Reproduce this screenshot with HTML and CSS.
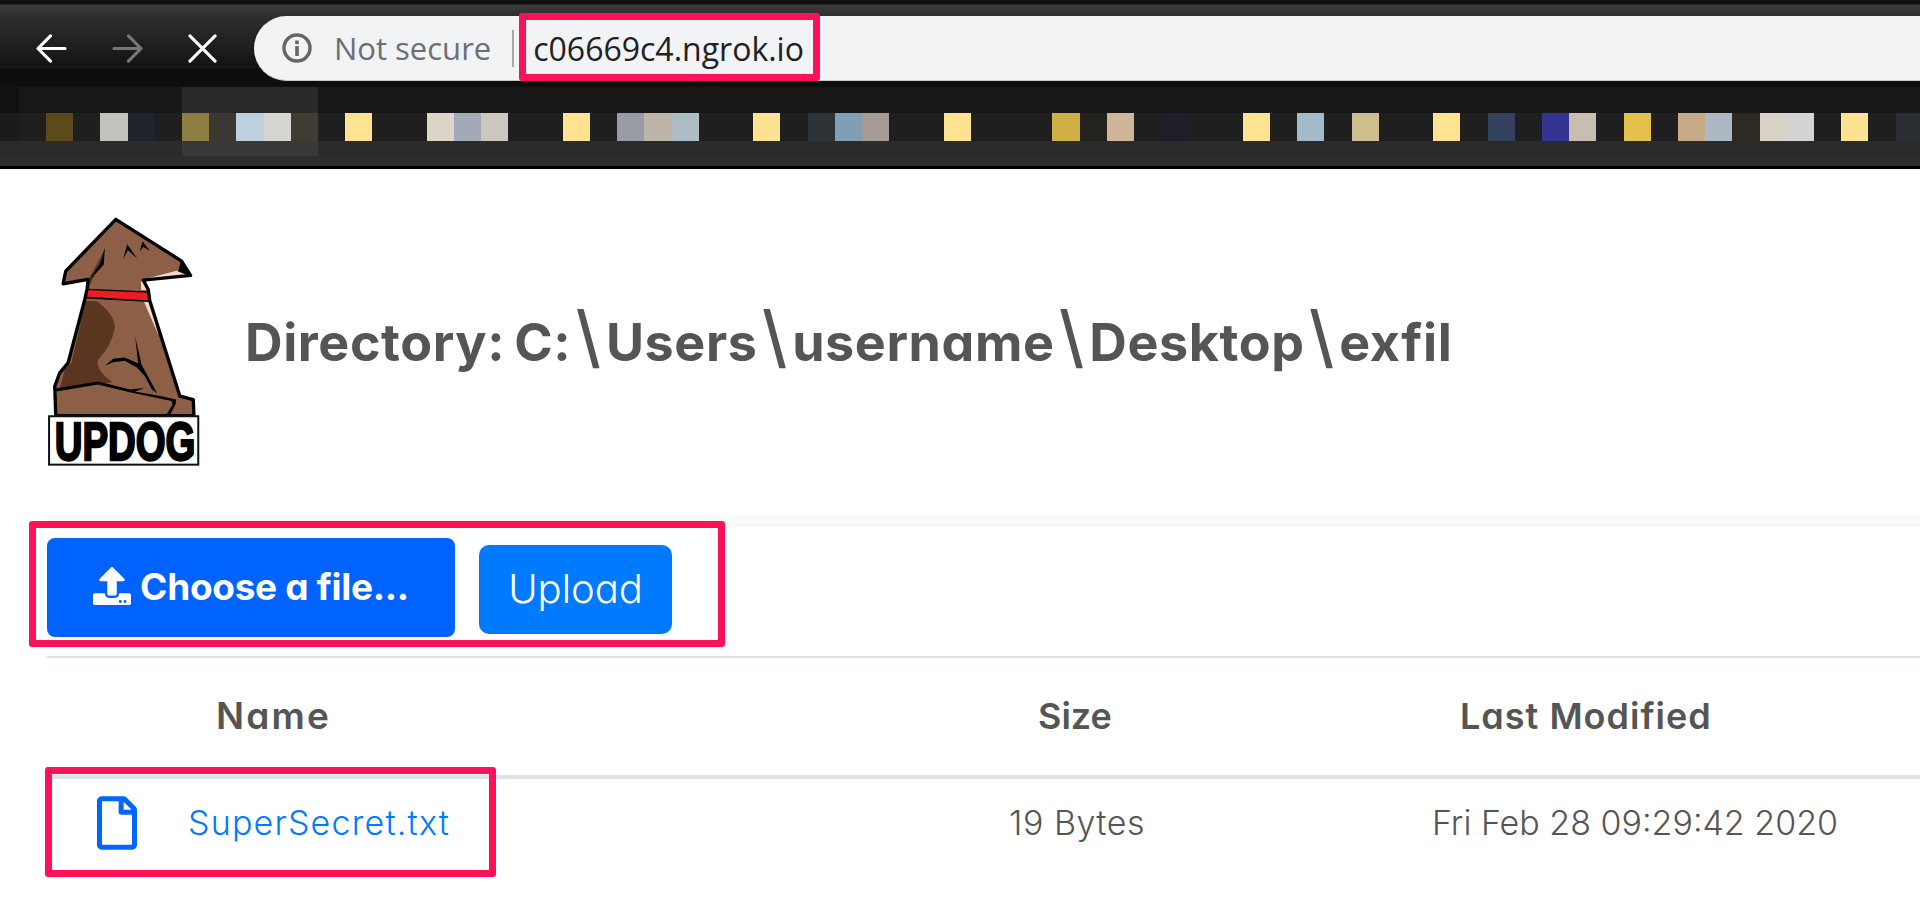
FILE: index.html
```html
<!DOCTYPE html>
<html lang="en">
<head>
<meta charset="utf-8">
<title>Updog</title>
<link rel="stylesheet" href="styles.css">
</head>
<body>
<header class="chrome">
  <div class="toolbar">
    <svg class="nav-icon" viewBox="0 0 32 30"><path d="M2 15H30M15 2 2 15 15 28" class="stroke-white"/></svg>
    <svg class="nav-icon nav-fwd" viewBox="0 0 32 30"><path d="M2 15H30M17 2 30 15 17 28" class="stroke-gray"/></svg>
    <svg class="nav-icon nav-close" viewBox="0 0 30 30"><path d="M2 2 28 28M28 2 2 28" class="stroke-white"/></svg>
    <div class="omnibox">
      <svg class="info" viewBox="0 0 30 30"><circle cx="15" cy="15" r="13" class="info-ring"/><rect x="13.2" y="7.5" width="3.6" height="3.6" class="info-dot"/><rect x="13.2" y="13" width="3.6" height="10" class="info-dot"/></svg>
      <span class="not-secure">Not secure</span>
      <span class="omni-sep"></span>
      <span class="url">c06669c4.ngrok.io<span class="mark mark-url"></span></span>
    </div>
  </div>
  <svg class="bookmarks" viewBox="0 0 1920 83" preserveAspectRatio="none" shape-rendering="crispEdges">
    <rect width="1920" height="83" fill="#111"/>
    <rect x="0" y="27" width="19" height="28" fill="#1b1b1b"/>
    <rect x="0" y="55" width="1920" height="25" fill="#2b2b2b"/>
    <rect x="19" y="1" width="1901" height="26" fill="#171717"/>
    <rect x="19" y="27" width="1901" height="28" fill="#1f1f1f"/>
    <rect x="0" y="70" width="1920" height="10" fill="#2d2d2d"/>
    <rect x="182" y="1" width="136" height="26" fill="#292929"/>
    <rect x="182" y="55" width="136" height="15" fill="#383838"/>
    <rect x="0" y="80" width="1920" height="3" fill="#000"/>
    <g transform="translate(18.8 27) scale(27.2 28)">
      <rect x="1" width="1" height="1" fill="#5c4a1c"/><rect x="3" width="1" height="1" fill="#c2c3bd"/><rect x="4" width="1" height="1" fill="#1f242c"/>
      <rect x="6" width="1" height="1" fill="#8f7e41"/><rect x="7" width="1" height="1" fill="#3a3830"/><rect x="8" width="1" height="1" fill="#bcd0de"/><rect x="9" width="1" height="1" fill="#d6d5d2"/><rect x="10" width="1" height="1" fill="#423b31"/>
      <rect x="12" width="1" height="1" fill="#fde28f"/><rect x="15" width="1" height="1" fill="#dcd5c8"/><rect x="16" width="1" height="1" fill="#a2a9b7"/><rect x="17" width="1" height="1" fill="#ccc8c1"/>
      <rect x="20" width="1" height="1" fill="#fde28f"/><rect x="22" width="1" height="1" fill="#9a9ca5"/><rect x="23" width="1" height="1" fill="#bfb4aa"/><rect x="24" width="1" height="1" fill="#aebcc6"/>
      <rect x="27" width="1" height="1" fill="#fde28f"/><rect x="29" width="1" height="1" fill="#2e3337"/><rect x="30" width="1" height="1" fill="#809fb6"/><rect x="31" width="1" height="1" fill="#a69a95"/>
      <rect x="34" width="1" height="1" fill="#fde28f"/><rect x="38" width="1" height="1" fill="#cfb044"/><rect x="39" width="1" height="1" fill="#24221c"/><rect x="40" width="1" height="1" fill="#cfb69a"/>
      <rect x="42" width="1" height="1" fill="#1f1f2a"/><rect x="45" width="1" height="1" fill="#fde28f"/><rect x="47" width="1" height="1" fill="#a3bac9"/><rect x="49" width="1" height="1" fill="#cdbf8d"/>
      <rect x="52" width="1" height="1" fill="#fde28f"/><rect x="54" width="1" height="1" fill="#34425f"/><rect x="56" width="1" height="1" fill="#343590"/><rect x="57" width="1" height="1" fill="#c8bdb0"/>
      <rect x="59" width="1" height="1" fill="#e4c04c"/><rect x="61" width="1" height="1" fill="#c6aa85"/><rect x="62" width="1" height="1" fill="#acb8c4"/><rect x="63" width="1" height="1" fill="#2d2a24"/>
      <rect x="64" width="1" height="1" fill="#d8d1c5"/><rect x="65" width="1" height="1" fill="#d3d4d1"/><rect x="67" width="1" height="1" fill="#fde28f"/><rect x="69" width="1" height="1" fill="#2a2e33"/>
    </g>
  </svg>
</header>

<main class="page">
  <section class="hero">
    <svg class="logo" viewBox="55 50 455 770" role="img" aria-label="Updog logo">
      <path class="dog-body" d="M100 253 108 215 258 60 455 185 482 228 340 242 355 270 360 305 450 590 490 600 492 648H78L75 560 90 520 115 490 165 300 172 268 175 240Z"/>
      <path class="dog-dark" d="M168 305H200Q255 345 255 385 245 440 205 480 195 510 248 548L90 568 105 510 125 490Z"/>
      <path class="dog-dark" d="M176 240 225 150 218 200 195 225 178 262Z"/>
      <path class="dog-light" d="M340 240 440 214 476 228Z"/>
      <path class="dog-light" d="M333 246H350L356 272H334Z"/>
      <path class="dog-light" d="M342 306H360L386 408Z"/>
      <path class="dog-red" d="M172 271 358 279V304L170 293Z"/>
      <path class="dog-black" d="M172 268 358 276V280L172 272ZM170 292 360 303V308L170 297Z"/>
      <path class="dog-black" d="M225 145 222 195 178 243 212 190Z"/>
      <path class="dog-black" d="M280 180 292 135 322 178 294 152ZM330 157 338 126 360 155 340 142Z"/>
      <path class="dog-black" d="M452 186 482 230 445 216Z"/>
      <path class="dog-black" d="M316 412 335 495 365 550 382 582 366 570 345 530 322 505 285 484 250 488 226 498 250 478 285 474 325 492Z"/>
      <path class="dog-black" d="M80 566 205 546 300 570 345 565 315 576 395 590 438 600 438 612 420 648H408L428 615 425 604 300 578 205 555 80 576Z"/>
      <path class="dog-outline" d="M100 253 108 215 258 60 455 185 482 228 340 242 355 270 360 305 450 590 490 600 492 648H78L75 560 90 520 115 490 165 300 172 268 175 240Z"/>
      <rect class="logo-box" x="58" y="650" width="447" height="145"/>
      <text class="logo-text" transform="translate(75 781) scale(1 1.39)">UPDOG</text>
    </svg>
    <h1 class="title">Directory: C:<span class="bs">\</span>Users<span class="bs">\</span>username<span class="bs">\</span>Desktop<span class="bs">\</span>exfil</h1>
  </section>

  <div class="strip"></div>

  <form class="upload">
    <span class="mark mark-upload"></span>
    <label class="choose">
      <svg class="upload-icon" viewBox="0 0 512 512"><path d="M296 384h-80c-13.3 0-24-10.7-24-24V192h-87.7c-17.8 0-26.7-21.5-14.1-34.1L242.3 5.7c7.5-7.5 19.8-7.5 27.3 0l152.2 152.2c12.6 12.6 3.7 34.1-14.1 34.1H320v168c0 13.3-10.7 24-24 24zm216-8v112c0 13.3-10.7 24-24 24H24c-13.3 0-24-10.7-24-24V376c0-13.3 10.7-24 24-24h136v8c0 30.9 25.1 56 56 56h80c30.9 0 56-25.1 56-56v-8h136c13.3 0 24 10.7 24 24zm-124 88c0-11-9-20-20-20s-20 9-20 20 9 20 20 20 20-9 20-20zm64 0c0-11-9-20-20-20s-20 9-20 20 9 20 20 20 20-9 20-20z"/></svg>
      <span class="choose-text">Choose a file...</span>
    </label>
    <button class="submit" type="button">Upload</button>
  </form>

  <table class="files">
    <colgroup><col class="col-name"><col class="col-size"><col class="col-date"></colgroup>
    <thead>
      <tr><th class="th-name">Name</th><th class="th-size">Size</th><th class="th-date">Last Modified</th></tr>
    </thead>
    <tbody>
      <tr>
        <td class="td-name">
          <span class="mark mark-file"></span>
          <svg class="file-icon" viewBox="0 0 384 512"><path d="M369.9 97.9L286 14C277 5 264.8-.1 252.1-.1H48C21.5 0 0 21.5 0 48v416c0 26.5 21.5 48 48 48h288c26.5 0 48-21.5 48-48V131.9c0-12.7-5.1-25-14.1-34zM332.1 128H256V51.9l76.1 76.1zM48 464V48h160v104c0 13.3 10.7 24 24 24h104v288H48z"/></svg>
          <a class="file-link" href="#">SuperSecret.txt</a>
        </td>
        <td class="td-size">19 Bytes</td>
        <td class="td-date">Fri Feb 28 09:29:42 2020</td>
      </tr>
    </tbody>
  </table>
</main>
</body>
</html>
```
FILE: styles.css
```css
* { box-sizing: border-box; }
html, body { margin: 0; height: 100%; overflow: hidden; background: #fff; }
body { font-family: Inter, "Liberation Sans", sans-serif; font-feature-settings: "cv11" 1; color: #555; }

/* browser chrome */
.chrome { display: flex; flex-direction: column; background: #111; padding-top: 4px; }
.toolbar {
  height: 82px; display: flex; align-items: flex-start; padding: 12px 0 0 36px;
  background: linear-gradient(#111 0, #3c3c3c 1px, #2e2e2e 12px, #141414 62px, #1a1a1a 63px, #0e0e0e 65px, #0e0e0e 82px);
}
.nav-icon { width: 31px; height: 29px; margin-top: 18px; flex: none; }
.nav-fwd { margin-left: 45px; }
.nav-close { margin-left: 45px; width: 29px; }
.stroke-white, .stroke-gray { fill: none; stroke-width: 3.2; stroke-linecap: round; stroke-linejoin: round; }
.stroke-white { stroke: #fff; }
.stroke-gray { stroke: #777; }
.omnibox {
  flex: 1; height: 65px; margin-left: 37px; display: flex; align-items: center; padding-left: 28px;
  background: #f1f3f4; border-radius: 33px 0 0 33px; border-bottom: 1px solid #c8c8c8;
  font-family: "Open Sans", sans-serif;
}
.info { width: 30px; height: 30px; flex: none; }
.info-ring { fill: none; stroke: #666; stroke-width: 3.4; }
.info-dot { fill: #666; }
.not-secure { margin-left: 22px; font-size: 31px; color: #6b6f74; white-space: nowrap; }
.omni-sep { width: 2px; height: 37px; margin-left: 21px; background: #a8a8a8; }
.url { position: relative; margin-left: 19px; font-size: 32px; color: #202124; white-space: nowrap; }
.bookmarks { display: block; width: 100%; height: 83px; }

/* annotation boxes */
.mark { position: absolute; border: 7px solid #ff1159; border-radius: 3px; pointer-events: none; }
.mark-url { left: -14px; top: -14px; width: 301px; height: 68px; }
.mark-upload { left: -18px; top: -6px; width: 696px; height: 126px; }
.mark-file { left: -2px; top: -12px; width: 451px; height: 110px; }

/* page */
.page { display: flex; flex-direction: column; }
.hero { height: 346px; display: flex; align-items: flex-start; padding: 47px 0 0 48px; }
.logo { width: 152px; height: 257px; flex: none; }
.dog-body { fill: #8d5f47; }
.dog-dark { fill: #5a3620; }
.dog-light { fill: #eed8c9; }
.dog-red { fill: #ed1c24; }
.dog-black { fill: #000; }
.dog-outline { fill: none; stroke: #000; stroke-width: 10; stroke-linejoin: round; }
.logo-box { fill: #fff; stroke: #111; stroke-width: 6; }
.logo-text { font-family: "Liberation Sans", sans-serif; font-weight: 700; font-size: 115px; fill: #000; stroke: #000; stroke-width: 5; }
.title {
  margin: 97px 0 0 45px; font-size: 52px; line-height: 60px; font-weight: 700; letter-spacing: 0.6px; word-spacing: -4px; color: #555; white-space: nowrap;
}
.bs { font-size: 68px; font-weight: 500; line-height: 0; margin: 0 4.5px; }
.strip { height: 12px; margin-left: 47px; background: #f8f9fa; }

.upload { position: relative; height: 129px; margin-left: 47px; display: flex; align-items: flex-start; padding-top: 11px; gap: 24px; }
.choose {
  width: 408px; height: 99px; display: flex; align-items: center; justify-content: center; gap: 9px;
  background: #0062ff; border-radius: 8px; color: #fff; font-size: 37px; font-weight: 700; padding-bottom: 2px;
}
.choose-text { letter-spacing: -0.3px; }
.upload-icon { width: 38px; height: 38px; fill: #fff; flex: none; margin-bottom: 2px; }
.submit {
  width: 193px; height: 89px; margin-top: 7px; border: 0; border-radius: 10px; background: #007bff; color: #fff; padding: 0 0 2px;
  font: 300 40px Inter, sans-serif; font-feature-settings: "cv11" 1;
}

.files { width: 1873px; margin-left: 47px; table-layout: fixed; border-collapse: collapse; border-top: 2px solid #dee2e6; }
.col-name { width: 962px; }
.col-size { width: 423px; }
.files th { height: 120px; padding: 0 0 2px; border-bottom: 4px solid #dee2e6; font-size: 36px; font-weight: 600; text-align: left; color: #555; }
.files td { height: 87px; font-size: 34px; font-weight: 300; color: #555; padding: 0; white-space: nowrap; }
.files .th-name { padding-left: 169px; font-size: 37px; letter-spacing: 2.2px; }
.files .th-size { padding-left: 29px; }
.files .th-date { padding-left: 28px; letter-spacing: 1px; }
.files .td-name { position: relative; display: flex; align-items: center; padding-left: 50px; }
.files .td-size { letter-spacing: 0.5px; }
.file-icon { width: 40px; height: 54px; fill: #0066ff; flex: none; }
.file-link { margin-left: 51px; color: #007bff; text-decoration: none; letter-spacing: 1.2px; }
```
